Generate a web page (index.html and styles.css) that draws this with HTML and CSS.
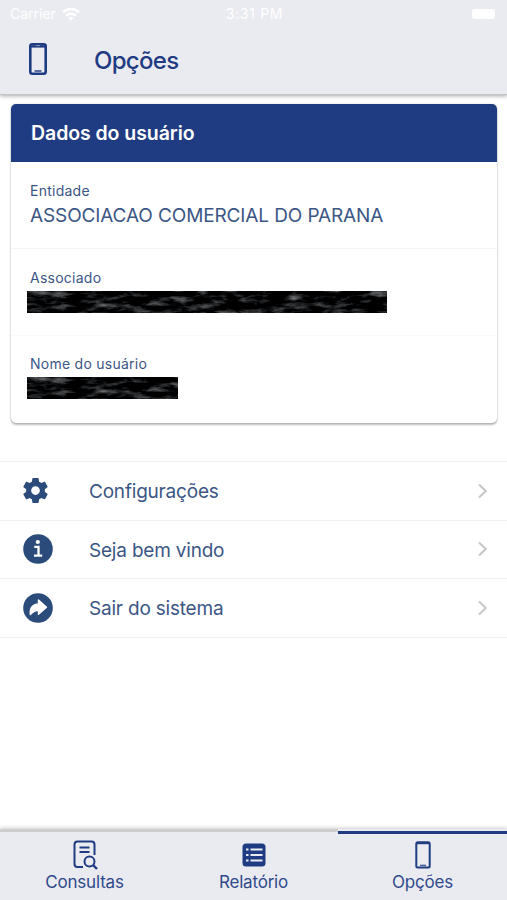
FILE: index.html
```html
<!DOCTYPE html>
<html lang="pt-BR">
<head>
  <meta charset="UTF-8" />
  <meta name="viewport" content="width=device-width, initial-scale=1" />
  <title>Opções</title>
  <link rel="stylesheet" href="styles.css">
</head>
<body>
  <!-- Status bar + page title -->
  <header class="header">
    <div class="status-bar">
      <div class="carrier">
        <span>Carrier</span>
        <svg class="wifi" viewBox="0 0 18 14" fill="none" stroke="#fff" stroke-width="2.6">
          <path d="M1 5.2a11.5 11.5 0 0 1 16 0M4 8.7a7.2 7.2 0 0 1 10 0" />
          <path d="M9 13.6L6.3 11a4 4 0 0 1 5.4 0z" fill="#fff" stroke="none" />
        </svg>
      </div>
      <span class="clock">3:31 PM</span>
      <span class="battery"></span>
    </div>
    <div class="title-bar">
      <svg class="title-icon" viewBox="0 0 18 32">
        <rect x="1.3" y="1.3" width="15.4" height="29.4" rx="2" fill="none" stroke="#1f3c82" stroke-width="2.6" />
        <path d="M2 3.4h14" stroke="#1f3c82" stroke-width="2.4" />
        <path d="M7 2.7h4" stroke="#8e9cc0" stroke-width="1" />
        <path d="M5.5 28h7" stroke="#4a609a" stroke-width="1.8" />
      </svg>
      <h1>Opções</h1>
    </div>
  </header>

  <main class="content">
    <!-- User data card -->
    <section class="card">
      <h2 class="card-header">Dados do usuário</h2>
      <div class="field">
        <div class="label">Entidade</div>
        <div class="value">ASSOCIACAO COMERCIAL DO PARANA</div>
      </div>
      <div class="field">
        <div class="label">Associado</div>
        <svg class="redacted long"><rect width="100%" height="100%" filter="url(#scratches)" /></svg>
      </div>
      <div class="field">
        <div class="label">Nome do usuário</div>
        <svg class="redacted short"><rect width="100%" height="100%" filter="url(#scratches)" /></svg>
      </div>
    </section>

    <!-- Options list -->
    <nav class="list">
      <a class="item">
        <svg class="item-icon gear" viewBox="2 2 20 20"><path fill="#2b4b7b" d="M19.43 12.98c.04-.32.07-.64.07-.98s-.03-.66-.07-.98l2.11-1.65c.19-.15.24-.42.12-.64l-2-3.46c-.12-.22-.39-.3-.61-.22l-2.49 1c-.52-.4-1.08-.73-1.69-.98l-.38-2.65C14.46 2.18 14.25 2 14 2h-4c-.25 0-.46.18-.49.42l-.38 2.65c-.61.25-1.17.59-1.69.98l-2.49-1c-.23-.09-.49 0-.61.22l-2 3.46c-.13.22-.07.49.12.64l2.11 1.65c-.04.32-.07.65-.07.98s.03.66.07.98l-2.11 1.65c-.19.15-.24.42-.12.64l2 3.46c.12.22.39.3.61.22l2.49-1c.52.4 1.08.73 1.69.98l.38 2.65c.03.24.24.42.49.42h4c.25 0 .46-.18.49-.42l.38-2.65c.61-.25 1.17-.59 1.69-.98l2.49 1c.23.09.49 0 .61-.22l2-3.46c.12-.22.07-.49-.12-.64l-2.11-1.65zM12 15.5c-1.93 0-3.5-1.57-3.5-3.5s1.57-3.5 3.5-3.5 3.5 1.57 3.5 3.5-1.57 3.5-3.5 3.5z" /></svg>
        <span class="item-text">Configurações</span>
        <svg class="chevron" viewBox="0 0 10 16"><path d="M1.5 1.5L8.3 8l-6.8 6.5" /></svg>
      </a>
      <a class="item">
        <svg class="item-icon" viewBox="0 0 30 30">
          <circle cx="15" cy="15" r="14.8" fill="#2b4b7b" />
          <circle cx="14.8" cy="8" r="2.1" fill="#fff" />
          <path d="M11.3 12.8h4.2v8.7M11 21.6h8.2" fill="none" stroke="#fff" stroke-width="2.3" />
        </svg>
        <span class="item-text">Seja bem vindo</span>
        <svg class="chevron" viewBox="0 0 10 16"><path d="M1.5 1.5L8.3 8l-6.8 6.5" /></svg>
      </a>
      <a class="item">
        <svg class="item-icon" viewBox="0 0 30 30">
          <circle cx="15" cy="15" r="14.8" fill="#2b4b7b" />
          <path d="M15.5 7l8 7.2-8 7v-4c-4 0-5.5 1.4-8.2 4.3-.6-6.5 2.2-10.3 8.2-10.6z" fill="#fff" stroke="#fff" stroke-width="1.4" stroke-linejoin="round" />
        </svg>
        <span class="item-text">Sair do sistema</span>
        <svg class="chevron" viewBox="0 0 10 16"><path d="M1.5 1.5L8.3 8l-6.8 6.5" /></svg>
      </a>
    </nav>
  </main>

  <!-- Bottom tabs -->
  <footer class="tabs">
    <a class="tab">
      <svg class="tab-icon" viewBox="0 0 28 30" fill="none" stroke="#1f3c82" stroke-width="2">
        <path d="M12 27H6.5a3 3 0 0 1-3-3V4.500a3 3 0 0 1 3-3h14a3 3 0 0 1 3 3V15M8.500 7.500h10M8.500 12h10" />
        <circle cx="18.500" cy="21.500" r="5" />
        <path d="M22 25l4 4" stroke-width="2.4" />
      </svg>
      <span>Consultas</span>
    </a>
    <a class="tab">
      <svg class="tab-icon" viewBox="0 0 28 30">
        <rect x="2.5" y="3.5" width="23" height="23" rx="3.5" fill="#1f3c82" />
        <path d="M6 9.500h2.500M6 15h2.500M6 20.500h2.500M10.500 9.500h12M10.500 15h12M10.500 20.500h12" stroke="#eaebf1" stroke-width="2.2" />
      </svg>
      <span>Relatório</span>
    </a>
    <a class="tab active">
      <svg class="tab-icon" viewBox="0 0 28 30">
        <rect x="7.3" y="2.2" width="13.4" height="25.4" rx="1.5" fill="none" stroke="#1f3c82" stroke-width="2" />
        <path d="M8 3.2h12" stroke="#1f3c82" stroke-width="2" />
        <path d="M11 25.4h6" stroke="#4a609a" stroke-width="1.5" />
      </svg>
      <span>Opções</span>
    </a>
  </footer>

  <!-- Grey scratches over the hidden values -->
  <svg class="defs">
    <filter id="scratches" x="0" y="0" width="100%" height="100%" color-interpolation-filters="sRGB">
      <feTurbulence type="fractalNoise" baseFrequency="0.05 0.16" numOctaves="4" seed="8" />
      <feColorMatrix values="1.1 0 0 0 -0.52  1.1 0 0 0 -0.515  1.1 0 0 0 -0.51  0 0 0 0 1" />
    </filter>
  </svg>
</body>
</html>
```
FILE: styles.css
```css
* {
  box-sizing: border-box;
}

body {
  margin: 0;
  height: 100vh;
  display: flex;
  flex-direction: column;
  overflow: hidden;
  background: #fff;
  color: #3b5685;
  font-family: Inter, "Liberation Sans", sans-serif;
}

h1, h2 {
  margin: 0;
}

/* Header */
.header {
  height: 95px;
  flex-shrink: 0;
  background: #eaebf1;
  border-bottom: 1px solid #c4c5c9;
  box-shadow: 0 1px 4px rgba(0, 0, 0, 0.35);
}

.status-bar {
  height: 27px;
  padding: 0 12px 0 10px;
  display: grid;
  grid-template-columns: 1fr auto 1fr;
  align-items: center;
  color: #fff;
  font-size: 14px;
}

.carrier {
  display: flex;
  align-items: center;
  gap: 6px;
}

.clock {
  padding-left: 4px;
  letter-spacing: 0.7px;
}

.wifi {
  width: 18px;
  height: 14px;
}

.battery {
  width: 23px;
  height: 10px;
  border-radius: 3px;
  background: #fff;
  justify-self: end;
}

.title-bar {
  height: 64px;
  padding-left: 29px;
  display: flex;
  align-items: center;
  gap: 47px;
}

.title-icon {
  width: 18px;
  height: 32px;
}

.title-bar h1 {
  padding-top: 2px;
  font-size: 24px;
  font-weight: 500;
  letter-spacing: -0.7px;
  color: #1f3c82;
}

.content {
  flex: 1;
}

/* Card */
.card {
  margin: 9px 10px 0 11px;
  height: 319px;
  border-radius: 5px;
  overflow: hidden;
  box-shadow: 0 2px 2px rgba(0, 0, 0, 0.25), 0 0 2px rgba(0, 0, 0, 0.2);
}

.card-header {
  height: 58px;
  padding-left: 20px;
  line-height: 59px;
  background: #1f3c82;
  color: #fff;
  font-size: 19.5px;
  font-weight: 600;
  letter-spacing: -0.07px;
}

.field {
  height: 87px;
  padding: 19px 0 0 19px;
  border-bottom: 1px solid #f3f3f4;
}

.field + .field {
  border-bottom-color: #fafafa;
}

.field:last-child {
  padding-top: 18px;
  border-bottom: none;
}

.label {
  font-size: 14px;
  line-height: 20px;
  letter-spacing: 0.25px;
}

.value {
  font-size: 19px;
  line-height: 29px;
  letter-spacing: -0.12px;
}

.redacted {
  display: block;
  height: 22px;
  margin: 3px 0 0 -3px;
}

.long {
  width: 360px;
}

.short {
  width: 151px;
}

/* Options list */
.list {
  margin-top: 38px;
  border-top: 1px solid #f1f1f2;
}

.item {
  height: 58.5px;
  padding: 0 19px 0 22.5px;
  display: flex;
  align-items: center;
  border-bottom: 1px solid #f1f1f2;
}

.item-icon {
  width: 30px;
  height: 30px;
}

.gear {
  width: 25px;
  height: 25px;
  margin-right: 5px;
}

.item-text {
  flex: 1;
  margin-left: 36.5px;
  padding-top: 2px;
  font-size: 19px;
  letter-spacing: -0.2px;
}

.chevron {
  width: 11px;
  height: 16px;
  fill: none;
  stroke: #c5c6c8;
  stroke-width: 2;
}

/* Bottom tabs */
.tabs {
  height: 71px;
  flex-shrink: 0;
  display: grid;
  grid-template-columns: repeat(3, 1fr);
  background: #eaebf1;
  box-shadow: 0 -1px 4px rgba(0, 0, 0, 0.2);
}

.tab {
  padding-top: 8px;
  display: flex;
  flex-direction: column;
  align-items: center;
  border-top: 3px solid #cdced0;
  color: #2f4a8b;
  font-size: 17px;
  line-height: 24px;
  letter-spacing: -0.2px;
}

/* the active marker sits a little lower than the grey line */
.tab.active {
  margin-top: 2px;
  padding-top: 6px;
  border-top-color: #1f3c82;
}

.tab-icon {
  width: 28px;
  height: 30px;
}

.defs {
  position: absolute;
  width: 0;
  height: 0;
}
```
